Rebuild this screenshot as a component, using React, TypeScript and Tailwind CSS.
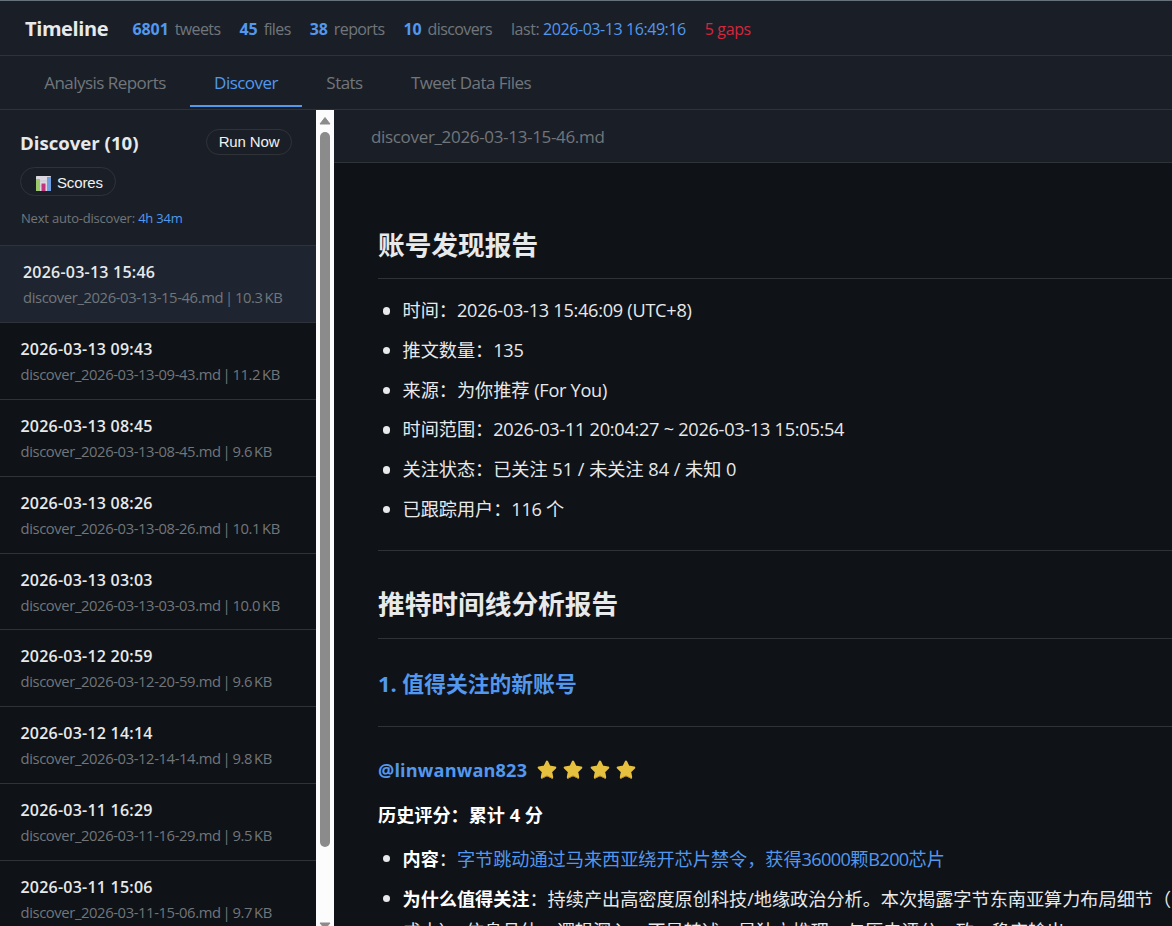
import type { ReactNode } from "react";

const META = [
    { value: "6801", label: "tweets" },
    { value: "45", label: "files" },
    { value: "38", label: "reports" },
    { value: "10", label: "discovers" },
];

const FILES = [
    { date: "2026-03-13 15:46", slug: "2026-03-13-15-46", size: "10.3 KB" },
    { date: "2026-03-13 09:43", slug: "2026-03-13-09-43", size: "11.2 KB" },
    { date: "2026-03-13 08:45", slug: "2026-03-13-08-45", size: "9.6 KB" },
    { date: "2026-03-13 08:26", slug: "2026-03-13-08-26", size: "10.1 KB" },
    { date: "2026-03-13 03:03", slug: "2026-03-13-03-03", size: "10.0 KB" },
    { date: "2026-03-12 20:59", slug: "2026-03-12-20-59", size: "9.6 KB" },
    { date: "2026-03-12 14:14", slug: "2026-03-12-14-14", size: "9.8 KB" },
    { date: "2026-03-11 16:29", slug: "2026-03-11-16-29", size: "9.5 KB" },
    { date: "2026-03-11 15:06", slug: "2026-03-11-15-06", size: "9.7 KB" },
];

const SUMMARY = [
    { label: "时间：", value: "2026-03-13 15:46:09 (UTC+8)" },
    { label: "推文数量：", value: "135" },
    { label: "来源：为你推荐 ", value: "(For You)" },
    { label: "时间范围：", value: "2026-03-11 20:04:27 ~ 2026-03-13 15:05:54" },
    { label: "关注状态：已关注 51 / 未关注 84 / 未知 0", value: "" },
    { label: "已跟踪用户：", value: "116 个" },
];

function Star() {
    return (
        <svg width="20" height="20" viewBox="0 0 20 20">
            <path
                d="M10 1.8l2.4 5 5.7.8-4.1 4 1 5.6-5-2.6-5 2.6 1-5.6-4.1-4 5.7-.8z"
                fill="#e6c13f"
                stroke="#e6c13f"
                strokeWidth="2.4"
                strokeLinejoin="round"
            />
            <path d="M4.6 18.4l5.4-2.6 5.4 2.6" fill="none" stroke="#b98d2c" strokeWidth="1" strokeLinecap="round" />
        </svg>
    );
}

function ChartIcon() {
    return (
        <svg width="15" height="15" viewBox="0 0 15 15">
            <rect width="15" height="15" rx="0.5" fill="#dcd8e2" />
            <path d="M0 5h15M0 10h15" stroke="#c3bdcc" strokeWidth="0.6" />
            <rect y="3" width="4" height="12" fill="#9bc96b" />
            <rect x="5.5" y="7.5" width="4" height="7.5" fill="#c2357c" />
            <rect x="11" y="1" width="4" height="14" fill="#6f9fe0" />
        </svg>
    );
}

function Bullet({ className, children }: { className: string; children: ReactNode }) {
    return (
        <li className="flex gap-[12.5px]">
            <span className={`size-[7.5px] shrink-0 rounded-full bg-[#e7e9ea] ${className}`} />
            <div>{children}</div>
        </li>
    );
}

function Header() {
    return (
        <header className="flex h-14 shrink-0 items-center border-t border-b border-t-[#68727c] border-b-[#2f3338] bg-[#1a1f27] pt-px pl-[25px] text-base">
            <h1 className="w-[107.5px] text-xl font-bold tracking-[-0.4px] text-[#e7e9ea]">Timeline</h1>
            <div className="flex gap-[19px] text-[#71767b]">
                {META.map((m) => (
                    <span key={m.label} className="flex gap-1.5 tracking-[-0.6px]">
                        <b className="tracking-[-0.1px] text-[#5298ee]">{m.value}</b>
                        {m.label}
                    </span>
                ))}
                <span className="tracking-[-0.43px]">
                    last: <span className="text-[#5298ee]">2026-03-13 16:49:16</span>
                </span>
                <span className="tracking-[-0.4px] text-[#d3273e]">5 gaps</span>
            </div>
        </header>
    );
}

function Tabs() {
    return (
        <nav className="flex h-[54px] shrink-0 items-start border-b border-[#2f3338] bg-[#1a1f27] pl-5 text-[17px] tracking-[-0.54px] text-[#71767b]">
            <button className="h-[51px] w-[170px] pt-0.5">Analysis Reports</button>
            <button className="h-[51px] w-28 border-b-2 border-[#5298ee] pt-1 text-[#5298ee]">Discover</button>
            <button className="h-[51px] w-[85px] pt-0.5">Stats</button>
            <button className="h-[51px] w-[168px] pt-0.5">Tweet Data Files</button>
        </nav>
    );
}

function Sidebar() {
    return (
        <aside className="flex w-[334px] shrink-0">
            <div className="flex w-[316px] flex-col overflow-hidden">
                <div className="h-[136px] shrink-0 border-b border-[#2f3338] bg-[#1a1f27] pt-[19px] pr-6 pl-5">
                    <div className="flex h-[26px] items-center justify-between">
                        <h2 className="pt-0.5 text-[18.6px] leading-[26px] font-bold text-[#e7e9ea]">Discover (10)</h2>
                        <button className="h-[26px] w-[86px] rounded-full border border-[#2f3338] font-[Liberation_Sans] text-[15px] leading-6 tracking-[-0.15px] text-[#f0f1f2]">
                            Run Now
                        </button>
                    </div>
                    <button className="mt-3 flex h-[29px] w-24 items-center gap-[6px] rounded-full border border-[#2f3338] pt-[3px] pl-[15px] font-[Liberation_Sans] text-[15px] tracking-[-0.15px] text-[#f0f1f2]">
                        <ChartIcon />
                        Scores
                    </button>
                    <p className="mt-3 pl-px text-[13px] leading-5 tracking-[-0.2px] text-[#71767b]">
                        Next auto-discover: <span className="text-[#5298ee]">4h 34m</span>
                    </p>
                </div>
                {FILES.map((f, i) => (
                    <div
                        key={f.slug}
                        className={
                            i === 0
                                ? "h-[76.9px] shrink-0 border-b border-[#2f3338] bg-[#1e2530] pt-[14px] pl-[23px]"
                                : "h-[76.9px] shrink-0 border-b border-[#2f3338] pt-[14px] pl-[20.5px]"
                        }
                    >
                        <p className="text-base leading-6 font-semibold tracking-[0.22px] text-[#e7e9ea]">{f.date}</p>
                        <p className="mt-px text-[14.8px] leading-6 tracking-[-0.4px] [word-spacing:-1.4px] whitespace-nowrap text-[#71767b]">
                            discover_{f.slug}.md | {f.size}
                        </p>
                    </div>
                ))}
            </div>
            <div className="flex w-[18px] flex-col items-center overflow-hidden bg-[#fcfcfc] pt-1.5">
                <svg className="shrink-0" width="12" height="9" viewBox="0 0 12 9">
                    <path d="M6 1.5L11 8H1z" fill="#8b8b8b" stroke="#8b8b8b" strokeLinejoin="round" />
                </svg>
                <div className="mt-[7px] h-[715px] w-2.5 shrink-0 rounded-full bg-[#8b8b8b]" />
                <svg className="mt-[75px] shrink-0" width="12" height="8" viewBox="0 0 12 8">
                    <path d="M1 1h10L6 7z" fill="#8b8b8b" stroke="#8b8b8b" strokeLinejoin="round" />
                </svg>
            </div>
        </aside>
    );
}

function Report() {
    return (
        <article className="w-[838px] pt-[61px] pl-11 text-[18.15px] text-[#e7e9ea]">
            <h1 className="h-[55px] border-b border-[#2f3338] text-[26.7px] leading-[42px] font-bold">账号发现报告</h1>
            <ul className="mt-3 pl-[4.5px] leading-[39.8px]">
                {SUMMARY.map((s) => (
                    <Bullet key={s.label} className="mt-4">
                        {s.label}
                        <span className="tracking-[-0.27px]">{s.value}</span>
                    </Bullet>
                ))}
            </ul>
            <hr className="mt-5 border-[#2f3338]" />
            <h1 className="mt-8 h-14 border-b border-[#2f3338] text-[26.7px] leading-[42px] font-bold">
                推特时间线分析报告
            </h1>
            <h2 className="mt-[27px] text-[21.8px] leading-9 font-bold text-[#5298ee]">1. 值得关注的新账号</h2>
            <hr className="mt-6 border-[#2f3338]" />
            <h3 className="mt-[27px] flex items-center gap-[9.5px] leading-8 font-bold tracking-[0.15px] text-[#5298ee]">
                @linwanwan823
                <span className="flex gap-[6.6px]">
                    <Star />
                    <Star />
                    <Star />
                    <Star />
                </span>
            </h3>
            <p className="mt-[13px] leading-8 font-bold text-white">历史评分：累计 4 分</p>
            <ul className="mt-3 pl-[4.5px] leading-8">
                <Bullet className="mt-3">
                    <b className="text-white">内容</b>：
                    <span className="text-[#5298ee]">
                        字节跳动通过马来西亚绕开芯片禁令，获得<span className="tracking-[-0.65px]">36000</span>颗
                        <span className="tracking-[-0.65px]">B200</span>芯片
                    </span>
                </Bullet>
                <div className="mt-2 whitespace-nowrap">
                    <Bullet className="mt-3">
                        <b className="text-white">为什么值得关注</b>：持续产出高密度原创科技/地缘政治分析。本次揭露字节东南亚算力布局细节（
                        <br />
                        成本），信息具体、逻辑深入，不是转述，是独立推理，与历史评分一致，稳定输出
                    </Bullet>
                </div>
            </ul>
        </article>
    );
}

export default function App() {
    return (
        <div className="flex h-[926px] w-[1172px] flex-col overflow-hidden bg-[#0f1217] font-['Open_Sans','Noto_Sans_CJK_SC',sans-serif]">
            <Header />
            <Tabs />
            <div className="flex min-h-0 flex-1">
                <Sidebar />
                <main className="min-w-0 flex-1 overflow-hidden">
                    <div className="flex h-[53px] items-center border-b border-[#2f3338] bg-[#1a1f27] pt-0.5 pl-[37px] text-[17px] tracking-[-0.33px] text-[#71767b]">
                        discover_2026-03-13-15-46.md
                    </div>
                    <Report />
                </main>
            </div>
        </div>
    );
}
